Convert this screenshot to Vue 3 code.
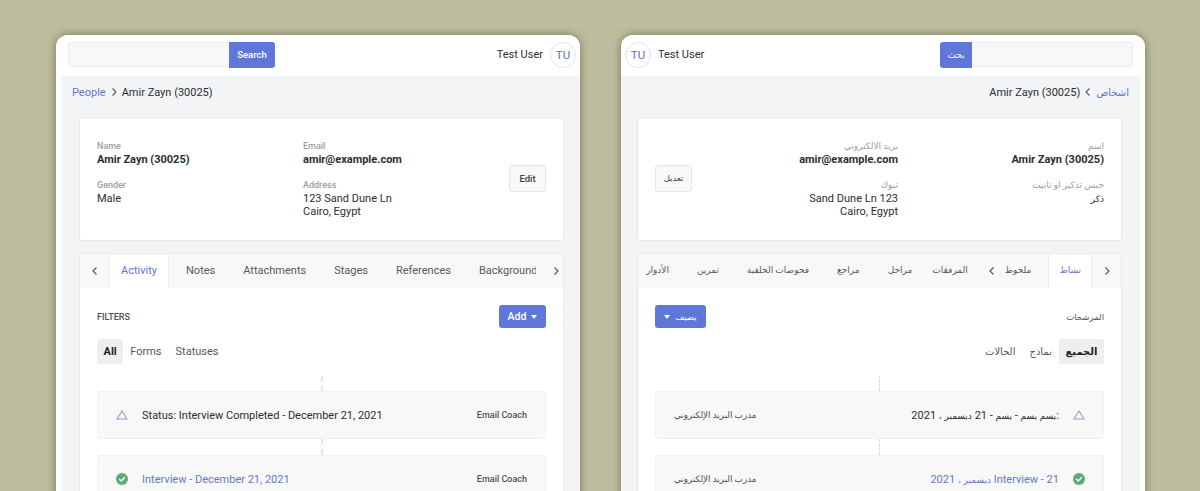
<script setup>
const screens = [
  {
    dir: 'ltr',
    search: 'Search',
    parent: 'People',
    fields: [
      { label: 'Name', lines: ['Amir Zayn (30025)'], strong: true },
      { label: 'Email', lines: ['amir@example.com'], strong: true },
      { label: 'Gender', lines: ['Male'] },
      { label: 'Address', lines: ['123 Sand Dune Ln', 'Cairo, Egypt'] },
    ],
    edit: 'Edit',
    tabs: ['Activity', 'Notes', 'Attachments', 'Stages', 'References', 'Background'],
    filters: 'FILTERS',
    add: 'Add',
    pills: ['All', 'Forms', 'Statuses'],
    status: 'Status: Interview Completed - December 21, 2021',
    interview: 'Interview - December 21, 2021',
    coach: 'Email Coach',
  },
  {
    dir: 'rtl',
    search: 'بحث',
    parent: 'اشخاص',
    fields: [
      { label: 'اسم', lines: ['Amir Zayn (30025)'], strong: true },
      { label: 'بريد الالكتروني', lines: ['amir@example.com'], strong: true },
      { label: 'جنس تذكير او تانيث', lines: ['ذكر'] },
      { label: 'تبوك', lines: ['123 Sand Dune Ln', 'Cairo, Egypt'] },
    ],
    edit: 'تعديل',
    tabs: ['نشاط', 'ملحوظ', 'المرفقات', 'مراحل', 'مراجع', 'فحوصات الخلفية', 'تمرين', 'الأدوار'],
    filters: 'المرشحات',
    add: 'يضيف',
    pills: ['الجميع', 'نماذج', 'الحالات'],
    status: ':يسم يسم - يسم - 21 ديسمبر ، 2021',
    interview: 'Interview - 21 ديسمبر ، 2021',
    coach: 'مدرب البريد الإلكتروني',
  },
]

// arabic words come out wider than the latin ones, so they get their own size
function parts(text) {
  return text
    .split(/([\u0600-\u06FF]+)/)
    .filter(Boolean)
    .map((value) => ({ value, arabic: /[\u0600-\u06FF]/.test(value) }))
}
</script>

<template>
  <main class="stage">
    <section v-for="screen in screens" :key="screen.dir" class="window" :class="'window--' + screen.dir" :dir="screen.dir">
      <header class="topbar">
        <div class="search">
          <div class="search__input"></div>
          <button type="button" class="search__btn">{{ screen.search }}</button>
        </div>
        <div class="user">
          <span class="user__name">Test User</span>
          <span class="user__avatar">TU</span>
        </div>
      </header>

      <div class="body">
        <nav class="crumbs">
          <a class="crumbs__link">{{ screen.parent }}</a>
          <svg class="crumbs__sep" width="8" height="10" viewBox="0 0 8 10" fill="none" aria-hidden="true">
            <path d="M2.5 1.5L6 5 2.5 8.5" stroke="currentColor" stroke-width="1.1" />
          </svg>
          <bdi dir="ltr">Amir Zayn (30025)</bdi>
        </nav>

        <div class="card person">
          <div class="person__grid">
            <div v-for="field in screen.fields" :key="field.label" class="field">
              <div class="field__label">{{ field.label }}</div>
              <div class="field__value" :class="{ 'is-strong': field.strong }">
                <div v-for="line in field.lines" :key="line">
                  <bdi v-if="field.strong" dir="ltr">{{ line }}</bdi>
                  <template v-else>
                    <span v-for="(part, i) in parts(line)" :key="i" :class="{ 'is-arabic': part.arabic }">{{ part.value }}</span>
                  </template>
                </div>
              </div>
            </div>
          </div>
          <button type="button" class="person__edit">{{ screen.edit }}</button>
        </div>

        <div class="card panel">
          <div class="tabs">
            <span class="tabs__arrow">
              <svg width="8" height="10" viewBox="0 0 8 10" fill="none" aria-hidden="true">
                <path d="M5.5 1.5L2 5l3.5 3.5" stroke="currentColor" stroke-width="1.2" />
              </svg>
            </span>
            <div class="tabs__list">
              <span v-for="(tab, i) in screen.tabs" :key="tab" class="tabs__item" :class="{ 'is-active': i === 0 }">{{ tab }}</span>
            </div>
            <span class="tabs__next">
              <svg width="8" height="10" viewBox="0 0 8 10" fill="none" aria-hidden="true">
                <path d="M2.5 1.5L6 5 2.5 8.5" stroke="currentColor" stroke-width="1.2" />
              </svg>
            </span>
          </div>

          <div class="panel__body">
            <div class="filters">
              <span class="filters__title">{{ screen.filters }}</span>
              <button type="button" class="filters__add">
                {{ screen.add }}
                <i class="caret"></i>
              </button>
            </div>
            <div class="pills">
              <span v-for="(pill, i) in screen.pills" :key="pill" class="pills__item" :class="{ 'is-active': i === 0 }">{{ pill }}</span>
            </div>

            <div class="dash"></div>
            <article class="entry">
              <svg class="entry__icon" width="12" height="10" viewBox="0 0 12 10" fill="none" aria-hidden="true">
                <path d="M6 1L11 9H1z" stroke="#8fa3c6" stroke-width="1.1" />
              </svg>
              <span class="entry__text">
                <span v-for="(part, i) in parts(screen.status)" :key="i" :class="{ 'is-arabic': part.arabic }">{{ part.value }}</span>
              </span>
              <span class="entry__who">{{ screen.coach }}</span>
            </article>
            <div class="dash"></div>
            <article class="entry">
              <svg class="entry__icon" width="12" height="12" viewBox="0 0 12 12" fill="none" aria-hidden="true">
                <circle cx="6" cy="6" r="6" fill="#5bab75" />
                <path d="M3.2 6.1l2 2 3.6-3.8" stroke="#fff" stroke-width="1.4" />
              </svg>
              <span class="entry__text entry__text--link">
                <span v-for="(part, i) in parts(screen.interview)" :key="i" :class="{ 'is-arabic': part.arabic }">{{ part.value }}</span>
              </span>
              <span class="entry__who">{{ screen.coach }}</span>
            </article>
          </div>
        </div>
      </div>
    </section>
  </main>
</template>

<style>
html,
body {
  margin: 0;
  overflow: hidden;
}
</style>

<style scoped>
.stage {
  display: flex;
  gap: 41px;
  box-sizing: border-box;
  height: 491px;
  padding: 35px 55px 0 56px;
  overflow: hidden;
  background: #bebd9e;
  font-family: Roboto, 'DejaVu Sans', sans-serif;
  font-size: 11px;
  color: #2a2e33;
}

.window {
  flex: 0 0 524px;
  display: flex;
  flex-direction: column;
  height: 520px;
  border-radius: 12px 12px 0 0;
  background: #fff;
  box-shadow: 0 0 10px rgba(70, 70, 40, 0.6);
  overflow: hidden;
}

.topbar {
  flex: none;
  display: flex;
  align-items: center;
  justify-content: space-between;
  height: 41px;
  padding: 0 4px 2px 12px;
  box-sizing: border-box;
  background: #fff;
}

.window--rtl .topbar {
  padding: 0 12px 2px 4px;
}

.search {
  display: flex;
}

.search__input {
  width: 161px;
  height: 25px;
  box-sizing: border-box;
  border: 1px solid #ececec;
  border-inline-end: 0;
  border-start-start-radius: 3px;
  border-end-start-radius: 3px;
  background: #f8f8f8;
}

.search__btn {
  width: 46px;
  height: 26px;
  padding: 0;
  border: 0;
  border-start-end-radius: 3px;
  border-end-end-radius: 3px;
  background: #5f77d9;
  color: #fff;
  font: 500 9.5px Roboto, 'DejaVu Sans', sans-serif;
}

.window--rtl .search__btn {
  width: 32px;
  font-size: 9px;
  font-weight: 400;
}

.user {
  display: flex;
  align-items: center;
  gap: 7px;
}

.user__avatar {
  display: flex;
  align-items: center;
  justify-content: center;
  width: 26px;
  height: 26px;
  box-sizing: border-box;
  border: 1px solid #e0e3f3;
  border-radius: 50%;
  color: #5f72b5;
  font-size: 11.5px;
}

.body {
  flex: 1;
  padding-inline: 18px 16px;
  border-inline-start: 5px solid #fff;
  background: #f2f4f6;
}

.crumbs {
  display: flex;
  align-items: center;
  gap: 4px;
  height: 32px;
  margin-inline-start: -7px;
}

.crumbs__link {
  color: #5f78c9;
}

.window--rtl .crumbs__link {
  font-size: 10px;
}

.crumbs__sep {
  color: #55595e;
}

.window--rtl .crumbs__sep {
  transform: scaleX(-1);
}

.card {
  border: 1px solid #e7e9ec;
  border-radius: 3px;
  background: #fff;
}

.person {
  display: flex;
  align-items: center;
  justify-content: space-between;
  margin-top: 9px;
  height: 124px;
  box-sizing: border-box;
  padding-inline: 17px;
}

.person__grid {
  display: grid;
  grid-template-columns: 206px 206px;
  row-gap: 12px;
  margin-bottom: 2px;
}

.field__label {
  font-size: 9px;
  font-weight: 500;
  line-height: 14px;
  color: #9b9ea3;
}

.window--rtl .field__label {
  font-weight: 400;
}

.field__value {
  font-size: 11px;
  line-height: 13px;
}

.field__value.is-strong {
  font-weight: 700;
}

.person__edit {
  width: 37px;
  height: 27px;
  padding: 0;
  margin-bottom: 2px;
  border: 1px solid #e6e6e6;
  border-radius: 3px;
  background: #f8f8f8;
  color: #3a3e43;
  font: 500 9.5px Roboto, 'DejaVu Sans', sans-serif;
}

.window--rtl .person__edit {
  font-size: 8.5px;
  font-weight: 400;
}

.panel {
  margin-top: 12px;
  border-bottom: 0;
}

.tabs {
  position: relative;
  display: flex;
  height: 34px;
  background: #f8f8f8;
}

.tabs__arrow {
  flex: none;
  display: flex;
  align-items: center;
  justify-content: center;
  width: 29px;
  padding-bottom: 1px;
  color: #55595e;
}

.window--rtl .tabs__arrow svg {
  transform: scaleX(-1);
}

.tabs__list {
  display: flex;
  flex: 1;
  min-width: 0;
  overflow: hidden;
  margin-inline-end: 27px;
}

.tabs__item {
  flex: none;
  display: flex;
  align-items: center;
  padding: 0 11px 2px;
  margin-inline-end: 6px;
  color: #55595e;
}

.tabs__item.is-active {
  background: #fff;
  color: #5f78c9;
  border-inline: 1px solid #eceef0;
}

.window--rtl .tabs__list {
  margin-inline-end: 0;
}

.window--rtl .tabs__item {
  font-size: 9px;
}

.window--rtl .tabs__item.is-active {
  padding-inline: 10px;
}

.window--rtl .tabs__item:nth-child(2) {
  margin-inline-end: 15px;
}

.window--rtl .tabs__item:nth-child(3) {
  margin-inline-end: -2px;
}

.tabs__next {
  position: absolute;
  top: 0;
  inset-inline-end: 3px;
  display: flex;
  align-items: center;
  height: 100%;
  padding-bottom: 1px;
  box-sizing: border-box;
  color: #55595e;
}

.window--rtl .tabs__next {
  inset-inline-end: 350px;
}

.window--rtl .tabs__next svg {
  transform: scaleX(-1);
}

.panel__body {
  padding: 17px 17px 0;
  background: #fff;
}

.filters {
  display: flex;
  align-items: center;
  justify-content: space-between;
}

.filters__title {
  font-size: 9px;
  font-weight: 500;
  color: #4c5055;
}

.window--rtl .filters__title {
  font-size: 8.5px;
  font-weight: 400;
}

.filters__add {
  display: flex;
  align-items: center;
  justify-content: center;
  gap: 5px;
  width: 47px;
  height: 23px;
  padding: 0;
  border: 0;
  border-radius: 3px;
  background: #5f77d9;
  color: #fff;
  font: 500 10.5px Roboto, 'DejaVu Sans', sans-serif;
}

.window--rtl .filters__add {
  width: 51px;
  font-size: 8.5px;
  font-weight: 400;
}

.caret {
  width: 0;
  height: 0;
  border-inline: 3.5px solid transparent;
  border-top: 4px solid #fff;
}

.pills {
  display: flex;
  align-items: center;
  gap: 7px;
  margin-top: 11px;
}

.pills__item {
  display: flex;
  align-items: center;
  height: 25px;
  color: #55595e;
}

.pills__item + .pills__item {
  margin-inline-start: 7px;
}

.pills__item.is-active {
  padding-inline: 6.5px;
  border-radius: 3px;
  background: #eeeeee;
  color: #1f2327;
  font-weight: 700;
}

.pills__item.is-active + .pills__item {
  margin-inline-start: 0;
}

.window--rtl .pills__item {
  font-size: 10px;
}

.dash {
  width: 0;
  height: 15px;
  margin-inline: auto;
  border-inline-start: 2px dashed #e4e5e7;
}

.window--rtl .dash {
  border-inline-start: 1px dashed #d9dbde;
}

.pills + .dash {
  margin-top: 12px;
}

.entry + .dash {
  height: 16px;
}

.entry {
  display: flex;
  align-items: center;
  height: 48px;
  box-sizing: border-box;
  padding-inline: 18px;
  border: 1px solid #eff0f1;
  border-radius: 3px;
  background: #f8f8f8;
}

.entry__icon {
  flex: none;
  margin-inline-end: 14px;
}

.entry__text {
  flex: 1;
}

.entry__text--link {
  color: #5f78c9;
}

.is-arabic {
  font-size: 9px;
}

.entry__who {
  font-size: 9px;
  font-weight: 500;
  color: #4c5055;
}

.window--rtl .entry__who {
  font-size: 8.8px;
  font-weight: 400;
}
</style>
